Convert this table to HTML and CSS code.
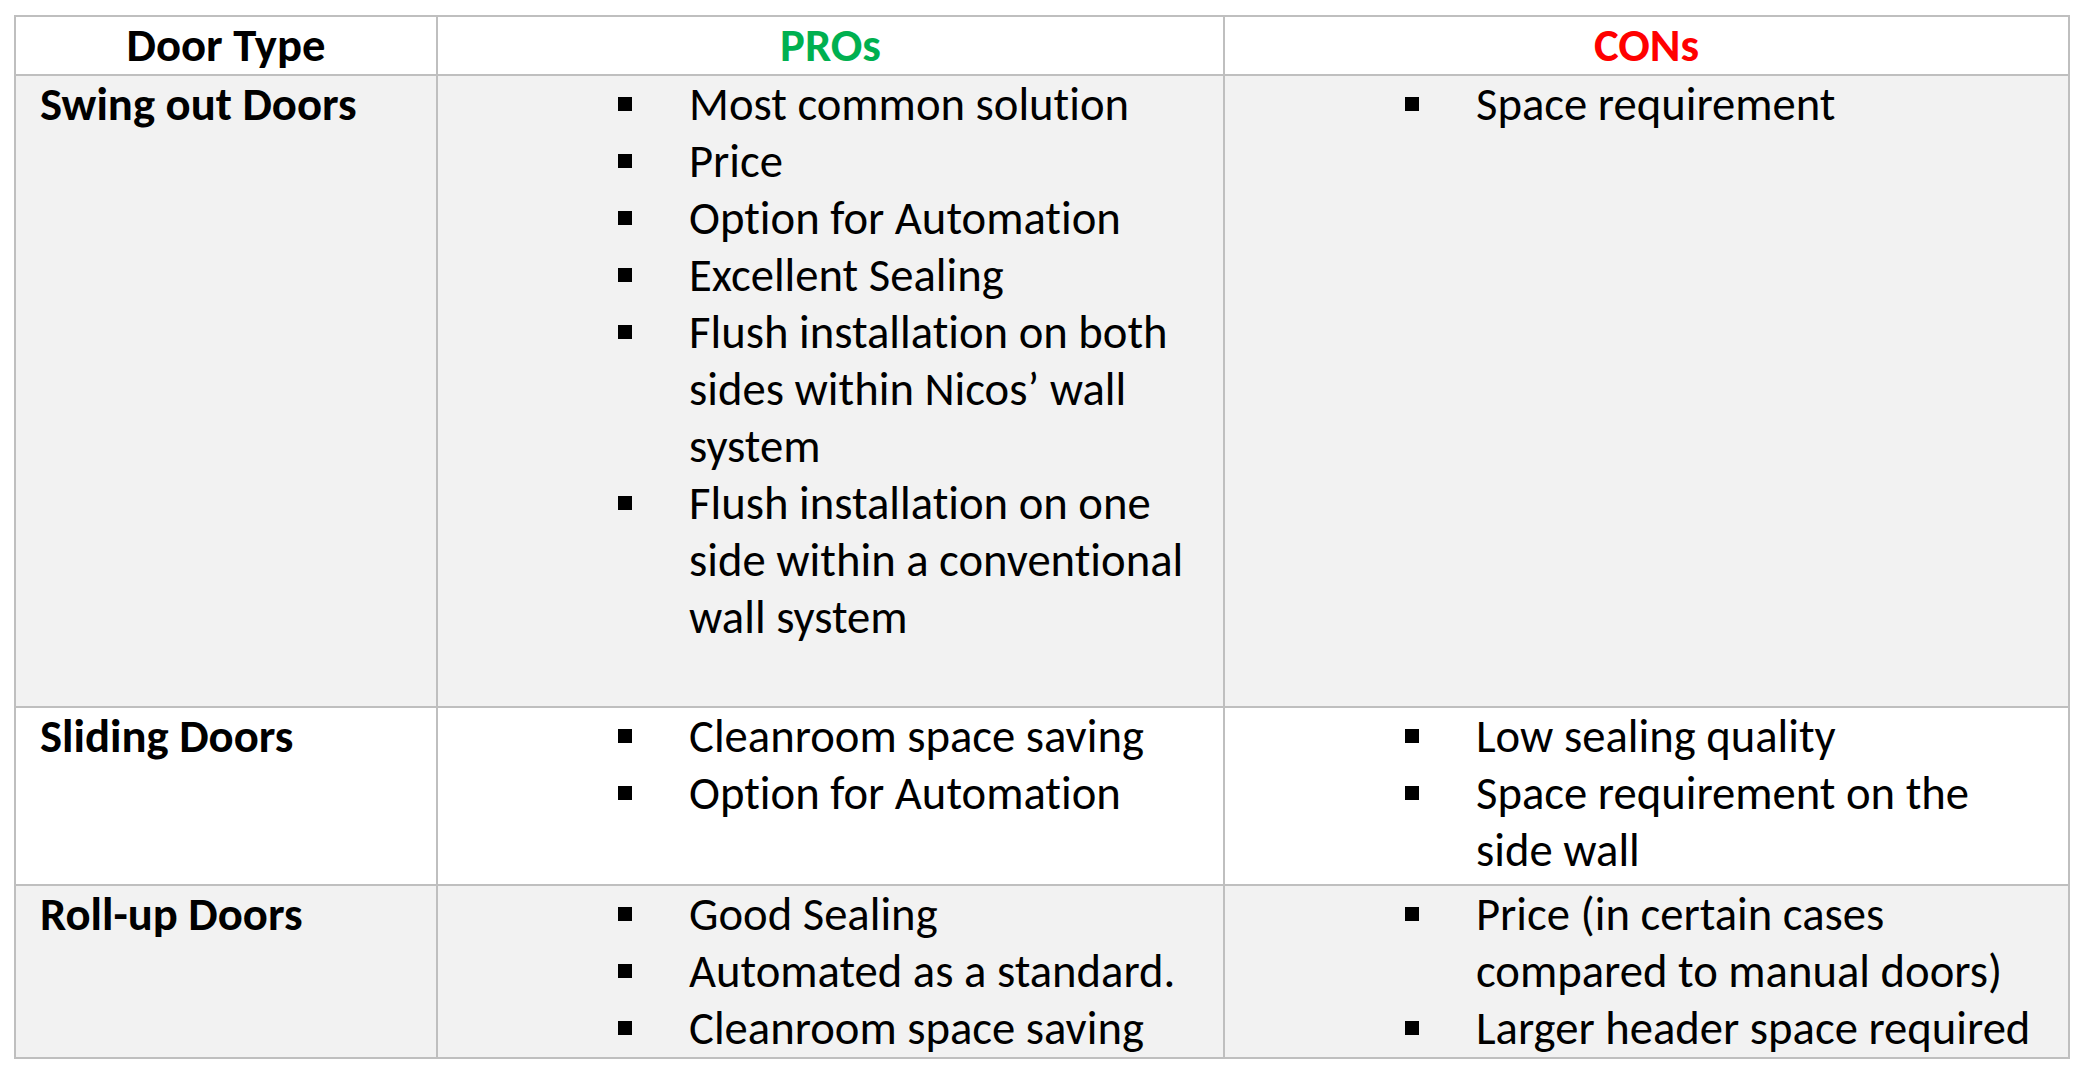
FILE: index.html
```html
<!DOCTYPE html>
<html lang="en">
<head>
<meta charset="utf-8">
<title>Door Types – PROs and CONs</title>
<link rel="stylesheet" href="styles.css">
</head>
<body>
<table class="doors">
  <colgroup>
    <col class="col-type">
    <col class="col-pros">
    <col class="col-cons">
  </colgroup>
  <thead>
    <tr class="head-row">
      <th class="head-type">Door Type</th>
      <th class="head-pros">PROs</th>
      <th class="head-cons">CONs</th>
    </tr>
  </thead>
  <tbody>
    <tr class="row shaded tall">
      <td class="type">Swing out Doors</td>
      <td>
        <ul class="points">
          <li>Most common solution</li>
          <li>Price</li>
          <li>Option for Automation</li>
          <li>Excellent Sealing</li>
          <li>Flush installation on both<br>sides within Nicos’ wall<br>system</li>
          <li>Flush installation on one<br>side within a conventional<br>wall system</li>
        </ul>
      </td>
      <td>
        <ul class="points">
          <li>Space requirement</li>
        </ul>
      </td>
    </tr>
    <tr class="row plain mid">
      <td class="type">Sliding Doors</td>
      <td>
        <ul class="points">
          <li>Cleanroom space saving</li>
          <li>Option for Automation</li>
        </ul>
      </td>
      <td>
        <ul class="points">
          <li>Low sealing quality</li>
          <li>Space requirement on the<br>side wall</li>
        </ul>
      </td>
    </tr>
    <tr class="row shaded">
      <td class="type">Roll-up Doors</td>
      <td>
        <ul class="points">
          <li>Good Sealing</li>
          <li>Automated as a standard.</li>
          <li>Cleanroom space saving</li>
        </ul>
      </td>
      <td>
        <ul class="points">
          <li>Price (in certain cases<br>compared to manual doors)</li>
          <li>Larger header space required</li>
        </ul>
      </td>
    </tr>
  </tbody>
</table>
</body>
</html>
```

FILE: styles.css
```css
html, body {
  background: #ffffff;
}

body {
  margin: 15px 0 0 14px;
  font-family: Carlito, Calibri, Lato, "Liberation Sans", sans-serif;
  font-size: 46.67px;
  line-height: 57px;
  color: #000000;
  font-variant-ligatures: none;
}

.doors {
  border-collapse: collapse;
  table-layout: fixed;
  width: 2054px;
}

.col-type { width: 422px; }
.col-pros { width: 787px; }
.col-cons { width: 845px; }

.doors th,
.doors td {
  border: 2px solid #bfbfbf;
  padding: 0;
  vertical-align: top;
  text-align: left;
}

.head-row th {
  background: #ffffff;
  font-weight: 700;
  text-align: center;
}

.head-pros { color: #00b050; }
.head-cons { color: #ff0000; }

.shaded td { background: #f2f2f2; }
.plain td { background: #ffffff; }

.doors td.type {
  font-weight: 700;
  padding-left: 24px;
}

.tall td { padding-bottom: 60px; }
.mid td { padding-bottom: 5px; }

.points {
  list-style: none;
  margin: 0;
  padding: 0 0 0 180px;
}

.points li {
  position: relative;
  padding-left: 71px;
  white-space: nowrap;
}

.points li::before {
  content: "";
  position: absolute;
  left: 0;
  top: 21px;
  width: 14px;
  height: 14px;
  background: #000000;
}
```
